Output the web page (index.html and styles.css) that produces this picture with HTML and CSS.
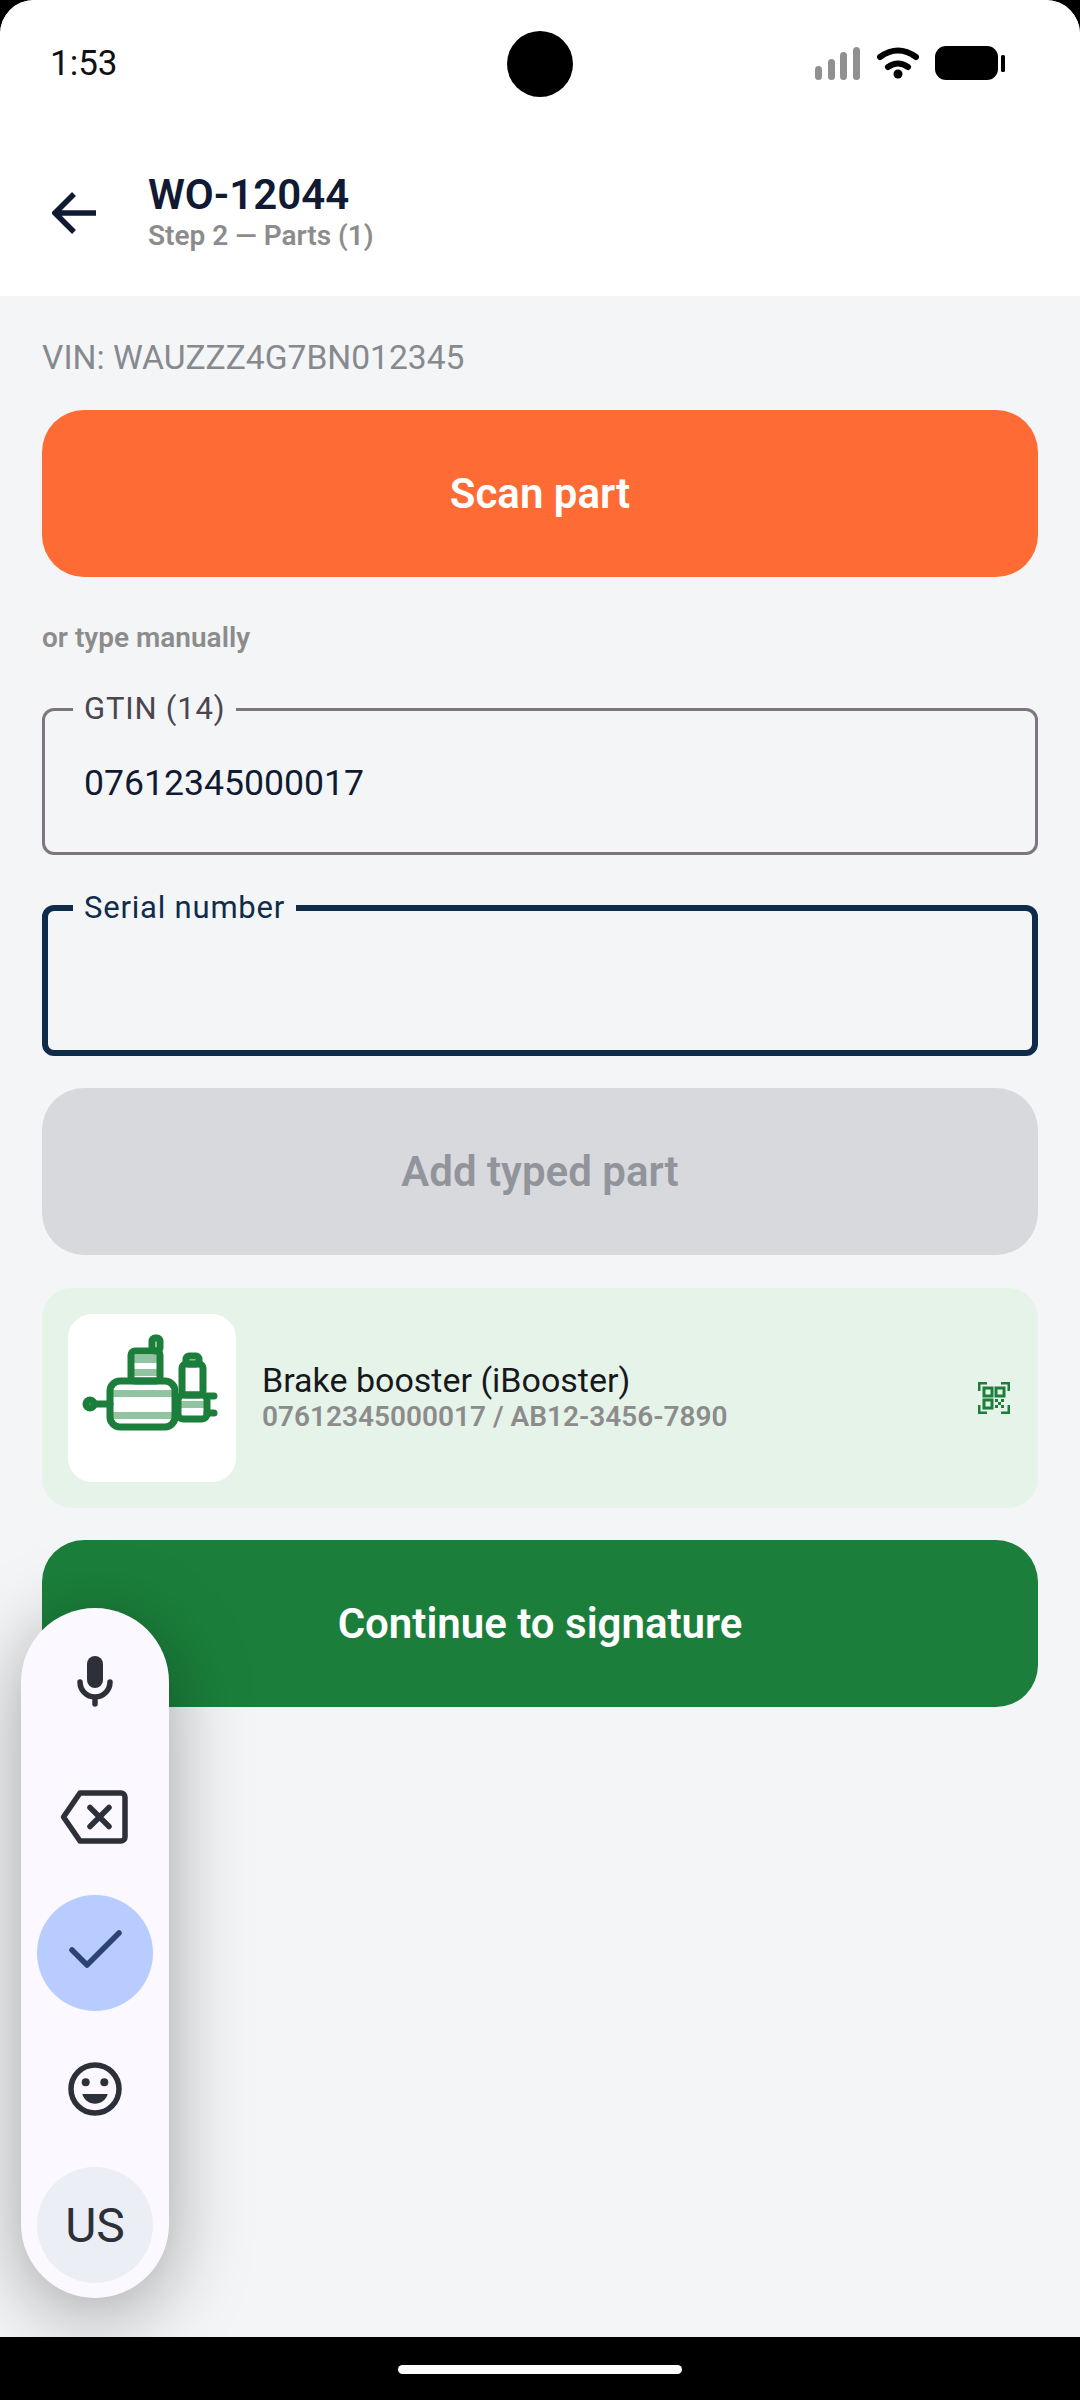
FILE: index.html
```html
<!DOCTYPE html>
<html lang="en">
<head>
    <meta charset="UTF-8" />
    <meta name="viewport" content="width=device-width, initial-scale=1" />
    <title>WO-12044</title>
    <link rel="stylesheet" href="styles.css">
</head>
<body>
    <div class="screen">
        <div class="status-bar">
            <span class="time">1:53</span>
            <span class="camera"></span>
            <div class="status-icons">
                <svg class="signal" width="46" height="34" viewBox="0 0 46 34">
                    <rect x="0" y="20" width="7" height="14" rx="3.5" />
                    <rect x="13" y="13" width="7" height="21" rx="3.5" />
                    <rect x="25" y="6" width="7" height="28" rx="3.5" />
                    <rect x="38" y="1" width="7" height="33" rx="3.5" />
                </svg>
                <svg class="wifi" width="42" height="34" viewBox="0 0 42 34">
                    <path d="M3 11Q21 -2 39 11" />
                    <path d="M11 21Q21 14 31 21" />
                    <circle cx="21" cy="28" r="4.5" />
                </svg>
                <svg class="battery" width="70" height="34" viewBox="0 0 70 34">
                    <rect x="0" y="0" width="63" height="34" rx="11" />
                    <rect x="66" y="9" width="4" height="17" rx="1.5" />
                </svg>
            </div>
        </div>

        <header class="top-bar">
            <svg class="back" width="46" height="44" viewBox="0 0 46 44">
                <path d="M44 22H4M22 3L3 22L22 41" />
            </svg>
            <div>
                <h1>WO-12044</h1>
                <p>Step 2 — Parts (1)</p>
            </div>
        </header>

        <main class="content">
            <div class="vin">VIN: WAUZZZ4G7BN012345</div>
            <button type="button" class="btn btn-scan">Scan part</button>
            <div class="manual">or type manually</div>

            <fieldset class="field">
                <legend>GTIN (14)</legend>
                <div class="field-value">07612345000017</div>
            </fieldset>
            <fieldset class="field focused">
                <legend>Serial number</legend>
            </fieldset>

            <button type="button" class="btn btn-disabled">Add typed part</button>

            <div class="part-card">
                <div class="part-thumb">
                    <svg width="168" height="168" viewBox="0 0 168 168">
                        <g class="stripes">
                            <rect x="45" y="76" width="60" height="7" />
                            <rect x="45" y="98" width="60" height="7" />
                            <rect x="66" y="41" width="24" height="8" />
                            <rect x="66" y="55" width="24" height="7" />
                            <rect x="112" y="87" width="26" height="7" />
                        </g>
                        <g class="outline">
                            <rect x="42" y="67" width="65" height="46" rx="10" />
                            <rect x="63" y="37" width="29" height="30" rx="4" />
                            <rect x="84" y="24" width="8" height="13" rx="3" />
                            <circle cx="22" cy="90" r="4" />
                            <path d="M26 90H42" />
                            <rect x="110" y="81" width="29" height="24" rx="5" />
                            <rect x="114" y="50" width="21" height="31" rx="4" />
                            <rect x="118" y="42" width="13" height="8" rx="3" />
                            <path d="M139 82H146M139 99H146" />
                        </g>
                    </svg>
                </div>
                <div class="part-info">
                    <div class="part-name">Brake booster (iBooster)</div>
                    <div class="part-code">07612345000017 / AB12-3456-7890</div>
                </div>
                <svg class="part-scan" width="32" height="32" viewBox="0 0 32 32">
                    <path class="qr-corner" d="M1 9V1H9M23 1H31V9M1 23V31H9M23 31H31V23" />
                    <rect class="qr-box" x="6" y="6" width="8" height="8" />
                    <rect class="qr-box" x="18" y="6" width="8" height="8" />
                    <rect class="qr-box" x="6" y="18" width="8" height="8" />
                    <path class="qr-dots" d="M17 17h3v3h-3zM23 17h3v3h-3zM20 20h3v3h-3zM17 23h3v3h-3zM23 23h3v3h-3z" />
                </svg>
            </div>

            <button type="button" class="btn btn-continue">Continue to signature</button>
        </main>

        <div class="nav-bar"><span class="home-pill"></span></div>

        <!-- floating keyboard toolbar -->
        <div class="kb-pill">
            <div class="kb-item">
                <svg width="48" height="60" viewBox="0 0 48 60">
                    <rect class="fill" x="16" y="5" width="16" height="32" rx="8" />
                    <path class="line" d="M9 31a15 15 0 0 0 30 0M24 46V53" />
                </svg>
            </div>
            <div class="kb-item">
                <svg width="70" height="60" viewBox="0 0 70 60">
                    <path class="line" d="M3.500 30L20 6H61a4 4 0 0 1 4 4V50a4 4 0 0 1-4 4H20Z" />
                    <path class="line" d="M30 20.500L49 39.500M49 20.500L30 39.500" />
                </svg>
            </div>
            <div class="kb-item kb-active">
                <svg width="60" height="48" viewBox="0 0 60 48">
                    <path class="check" d="M7 21L22 36L54 4" />
                </svg>
            </div>
            <div class="kb-item">
                <svg width="60" height="60" viewBox="0 0 60 60">
                    <circle class="line" cx="30" cy="30" r="24" />
                    <circle class="fill" cx="20.700" cy="23.300" r="4" />
                    <circle class="fill" cx="39.300" cy="23.300" r="4" />
                    <path class="fill" d="M17.300 35H42.700C41 41 36 44.700 30 44.700S19 41 17.300 35Z" />
                </svg>
            </div>
            <div class="kb-item kb-lang">US</div>
        </div>
    </div>
</body>
</html>
```

FILE: styles.css
```css
* {
    box-sizing: border-box;
}
body {
    margin: 0;
    background: #000;
    font-family: Roboto, "Noto Sans", sans-serif;
}
.screen {
    position: relative;
    width: 1080px;
    height: 2400px;
    display: flex;
    flex-direction: column;
    overflow: hidden;
    background: #f4f5f7;
    border-radius: 34px 34px 0 0;
}

/* status bar */
.status-bar {
    position: relative;
    height: 126px;
    padding: 0 75px 0 50px;
    display: flex;
    align-items: center;
    justify-content: space-between;
    background: #fff;
}
.time {
    font-size: 35px;
    color: #111;
}
.camera {
    position: absolute;
    left: 507px;
    top: 31px;
    width: 66px;
    height: 66px;
    border-radius: 50%;
    background: #000;
}
.status-icons {
    display: flex;
    align-items: center;
    gap: 16px;
}
.signal {
    fill: #909090;
}
.wifi path {
    fill: none;
    stroke: #000;
    stroke-width: 6;
    stroke-linecap: round;
}
.wifi circle,
.battery {
    fill: #000;
}

/* header */
.top-bar {
    height: 170px;
    padding: 4px 0 0 52px;
    display: flex;
    align-items: center;
    gap: 50px;
    background: #fff;
}
.back path {
    fill: none;
    stroke: #101a33;
    stroke-width: 5.500;
}
.top-bar h1 {
    margin: 0;
    font-size: 42px;
    line-height: 46px;
    font-weight: 600;
    color: #101a33;
}
.top-bar p {
    margin: 0;
    font-size: 28px;
    line-height: 36px;
    font-weight: 600;
    color: #8c8c8c;
}

/* main column */
.content {
    flex: 1;
    padding: 43px 42px 0;
    display: flex;
    flex-direction: column;
}
.vin {
    font-size: 33.600px;
    line-height: 38px;
    color: #868a8f;
    margin-bottom: 33px;
}
.btn {
    flex: none;
    height: 167px;
    width: 100%;
    border: none;
    border-radius: 42px;
    font-family: inherit;
    font-size: 42px;
    font-weight: 600;
    color: #fff;
}
.btn-scan {
    background: #ff6b35;
}
.btn-disabled {
    margin-top: 32px;
    background: #d8d9dc;
    color: #92949c;
}
.btn-continue {
    margin-top: 32px;
    background: #1b7f3b;
}
.manual {
    margin-top: 45px;
    margin-bottom: 37px;
    font-size: 28px;
    line-height: 32px;
    font-weight: 600;
    color: #8c8c8c;
}

/* outlined text fields */
.field {
    margin: 0;
    padding: 0 39px;
    height: 164px;
    min-width: 0;
    border: 3px solid #7d7680;
    border-radius: 12px;
}
.field legend {
    margin-left: -11px;
    padding: 0 11px;
    font-size: 31px;
    line-height: 36px;
    letter-spacing: 0.8px;
    color: #4a4650;
}
.field-value {
    margin-top: 34px;
    font-size: 35.600px;
    line-height: 44px;
    color: #101a33;
}
.field.focused {
    margin-top: 35px;
    height: 166px;
    border: 6px solid #0f2c4a;
}
.field.focused legend {
    margin-left: -14px;
    margin-bottom: 4px;
    color: #0f2c4a;
}

/* scanned part */
.part-card {
    margin-top: 33px;
    height: 220px;
    padding: 0 28px 0 26px;
    display: flex;
    align-items: center;
    gap: 26px;
    background: #e6f3e9;
    border-radius: 30px;
}
.part-thumb {
    width: 168px;
    height: 168px;
    flex: none;
    background: #fff;
    border-radius: 24px;
}
.part-thumb svg {
    display: block;
}
.stripes {
    fill: #93c4a2;
}
.outline {
    fill: none;
    stroke: #1b7f3b;
    stroke-width: 7;
    stroke-linecap: round;
}
.part-info {
    flex: 1;
}
.part-name {
    font-size: 34px;
    line-height: 38px;
    color: #17181c;
}
.part-code {
    font-size: 28px;
    line-height: 36px;
    font-weight: 600;
    color: #8c8c8c;
}
.qr-corner {
    fill: none;
    stroke: #1b7f3b;
    stroke-width: 3;
}
.qr-box {
    fill: none;
    stroke: #1b7f3b;
    stroke-width: 3;
}
.qr-dots {
    fill: #1b7f3b;
}

/* bottom nav */
.nav-bar {
    flex: none;
    height: 63px;
    display: flex;
    align-items: center;
    justify-content: center;
    background: #000;
}
.home-pill {
    width: 284px;
    height: 9px;
    margin-top: 2px;
    border-radius: 5px;
    background: #fff;
}

/* floating keyboard toolbar, sits over the page */
.kb-pill {
    position: absolute;
    left: 21px;
    top: 1608px;
    width: 148px;
    height: 690px;
    padding: 15px 16px;
    display: flex;
    flex-direction: column;
    gap: 20px;
    background: #fbf9ff;
    border-radius: 74px;
    box-shadow: 0 16px 80px rgba(0,0,0,0.34);
}
.kb-item {
    width: 116px;
    height: 116px;
    flex: none;
    display: flex;
    align-items: center;
    justify-content: center;
    border-radius: 50%;
    font-size: 48px;
    color: #2d3038;
}
.kb-active {
    background: #b8ccff;
}
.kb-lang {
    background: #eceef6;
}
.kb-item .fill {
    fill: #2d3038;
}
.kb-item .line {
    fill: none;
    stroke: #2d3038;
    stroke-width: 5.500;
    stroke-linecap: round;
    stroke-linejoin: round;
}
.kb-item .check {
    fill: none;
    stroke: #2c4270;
    stroke-width: 5.500;
    stroke-linecap: round;
    stroke-linejoin: round;
}
```
